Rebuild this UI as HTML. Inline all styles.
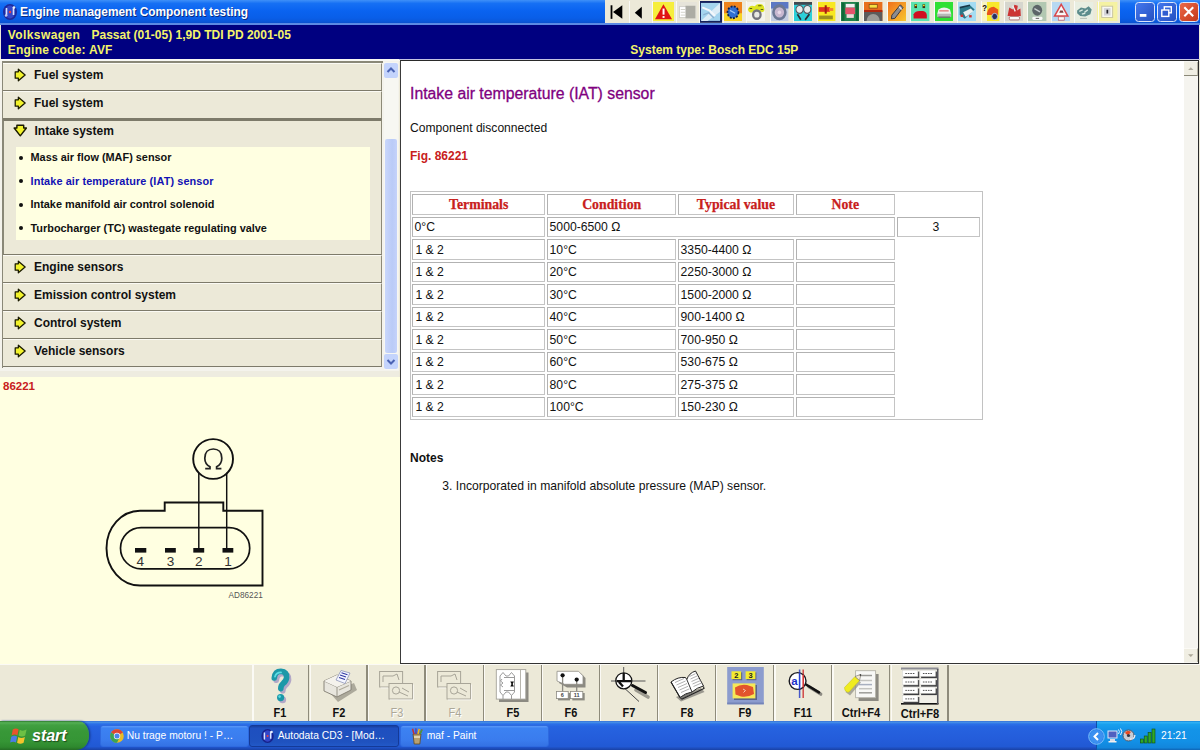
<!DOCTYPE html>
<html><head><meta charset="utf-8"><title>Autodata</title>
<style>
*{box-sizing:border-box;margin:0;padding:0}
html,body{width:1200px;height:750px;overflow:hidden;background:#ECE9D8;font-family:"Liberation Sans",sans-serif;}
.abs{position:absolute}
.tx{position:absolute;white-space:pre;line-height:1}
#title{left:0;top:0;width:1200px;height:24px;background:linear-gradient(#3F90F8 0,#1670F4 14%,#0A63F0 45%,#095EE8 75%,#0A56D8 92%,#0848BC 100%);}
#title .t{left:20px;top:4.1px;color:#fff;font-weight:bold;font-size:13px;white-space:nowrap;text-shadow:1px 1px 0 #0A2A80;transform-origin:0 0;transform:scaleX(.915)}
#hdr{left:1.3px;top:24.7px;width:1197.5px;height:34.3px;background:#000080;}
#hdr div{position:absolute;margin-top:-.5px;color:#F4F46A;font-weight:bold;font-size:12px;white-space:pre}
#lp{left:0;top:60px;width:399px;height:318px;background:#F4F3EC}
.row{position:absolute;margin-top:.5px;left:2px;width:380px;height:28px;background:#ECE9D8;border-bottom:1px solid #7D7A6A;border-right:1px solid #8D8A78;border-top:1px solid #FBFAF4}
.row span{position:absolute;left:32px;top:4px;font-weight:bold;font-size:12px;color:#111;white-space:nowrap}
.row.ex{border-top:2px solid #7D7A6A;border-left:2px solid #8A8878}
.row.ex span{left:30.5px;top:3px}
.ico{position:absolute;left:11.8px;top:4.9px;width:12.2px;height:14px}
.row.ex .ico{left:8.9px;top:3.2px;width:14.6px;height:13.6px}
#sub{left:16px;top:147px;width:353.7px;height:93.3px;background:#FFFFE1}
.sub{position:absolute;left:30.5px;font-weight:bold;font-size:10.9px;color:#111;white-space:nowrap}
.dot{position:absolute;left:18.5px;width:4px;height:4px;border-radius:2px;background:#111}
#sb{left:384px;top:62px;width:14px;height:308px;background:#F7F7F2}
#lfig{left:0;top:377px;width:399.5px;height:287.2px;background:#FFFFE1}

</style></head><body>
<div id="title" class="abs"><div class="t abs">Engine management Component testing</div></div>
<svg class="abs" style="left:2px;top:3px" width="17" height="18" viewBox="0 0 17 18">
<ellipse cx="8" cy="9" rx="7" ry="8" fill="#1C2A9C"/><ellipse cx="8" cy="9" rx="5" ry="6.5" fill="#3346C8"/>
<path d="M4.5 5 V13 M11.5 4 V12" stroke="#D8E4FF" stroke-width="1.6"/><circle cx="8" cy="9" r="1.2" fill="#F04040"/><circle cx="12" cy="4.5" r="1.3" fill="#E8F0FF"/><circle cx="4" cy="12.5" r="1.2" fill="#C0C8F0"/></svg>
<div class="abs" style="left:0px;top:23px;width:1200px;height:2px;background:#5C8AE4;"></div>
<div id="hdr" class="abs">
<div style="left:6.5px;top:3.8px;letter-spacing:.4px">Volkswagen</div>
<div style="left:90.2px;top:3.8px">Passat (01-05) 1,9D TDI PD 2001-05</div>
<div style="left:6.5px;top:19.1px;letter-spacing:.22px">Engine code: AVF</div>
<div style="left:629px;top:19.1px">System type: Bosch EDC 15P</div>
</div>
<div class="abs" style="left:604.5px;top:0px;width:515px;height:23px;background:#ECE9D8;"></div>
<svg class="abs" style="left:606.90px;top:2px" width="21.5" height="19.2" viewBox="0 0 21.5 20.5" preserveAspectRatio="none"><rect x="3.6" y="3.5" width="1.8" height="14.5" fill="#000"/><path d="M15.3 3.5 V18 L6 10.75 Z" fill="#000"/></svg>
<svg class="abs" style="left:630.34px;top:2px" width="21.5" height="19.2" viewBox="0 0 21.5 20.5" preserveAspectRatio="none"><path d="M11.8 5 V18 L4.8 11.5 Z" fill="#000"/></svg>
<svg class="abs" style="left:653.28px;top:2px" width="21" height="19.2" viewBox="0 0 21.5 20.5" preserveAspectRatio="none"><rect width="21.5" height="20.5" fill="#F6EE3C"/><path d="M10.7 2.5 L19.5 18.5 H2 Z" fill="#E01414"/><rect x="9.8" y="7" width="2" height="6.5" fill="#fff"/><rect x="9.8" y="15" width="2" height="2" fill="#fff"/></svg>
<svg class="abs" style="left:676.72px;top:2px" width="20.3" height="19.2" viewBox="0 0 21.5 20.5" preserveAspectRatio="none"><rect width="21.5" height="20.5" fill="#E6E4DA"/><rect x="2.5" y="5" width="9" height="11.5" fill="#fff" stroke="#C8C8C0" stroke-width=".8"/><rect x="9" y="4" width="10.5" height="13.5" fill="#ACACA4"/><path d="M4 8h5M4 11h5M4 14h5" stroke="#D0D0C8" stroke-width="1"/></svg>
<svg class="abs" style="left:698.56px;top:0.8px" width="23" height="21.8" viewBox="0 0 21.5 20.5" preserveAspectRatio="none"><rect x="0" y="0" width="21.5" height="20.5" fill="#14205C"/><rect x="1.8" y="1.8" width="17.9" height="16.9" fill="#A4D4EE"/><path d="M1.8 18.7 L19.7 1.8 V10 L8 18.7 Z" fill="#DCECF6"/><path d="M3 6 L10 9 L15 14" stroke="#F4F8FC" stroke-width="2" fill="none"/><path d="M4 13 L9 11 L14 16" stroke="#8CB0D0" stroke-width="1.2" fill="none"/></svg>
<svg class="abs" style="left:723.60px;top:2px" width="18.4" height="19.2" viewBox="0 0 21.5 20.5" preserveAspectRatio="none"><rect width="21.5" height="20.5" fill="#F0841C"/><rect y="12" width="21.5" height="8.5" fill="#F8D424"/><circle cx="10.5" cy="11" r="6.4" fill="#2F6FD2" stroke="#10204C" stroke-width="2" stroke-dasharray="2.2 1.6"/><path d="M7 9 L13 12" stroke="#A0C8F8" stroke-width="1.4"/></svg>
<svg class="abs" style="left:747.04px;top:2px" width="18.4" height="19.2" viewBox="0 0 21.5 20.5" preserveAspectRatio="none"><rect width="21.5" height="20.5" fill="#F4F4EC"/><path d="M1 8 Q3 2.5 9 4.5 Q12 1 17 2.5 Q21.5 4 20 10 Q17 12 14 9 Q9 8 6 11 Q2 12 1 8Z" fill="#DCE420"/><circle cx="11.5" cy="13.5" r="4.4" fill="#E8E8E4" stroke="#74747C" stroke-width="2.6"/><path d="M3 7h3M13 4h4M16 8h3" stroke="#606010" stroke-width="1.1"/></svg>
<svg class="abs" style="left:770.48px;top:2px" width="18.4" height="19.2" viewBox="0 0 21.5 20.5" preserveAspectRatio="none"><rect width="21.5" height="20.5" fill="#C4CEE2"/><rect width="21.5" height="7" fill="#5C78C4"/><circle cx="11" cy="11" r="7" fill="#C8B8D0" stroke="#6C7894" stroke-width="3"/><circle cx="11" cy="11" r="2" fill="#E8D8E8"/></svg>
<svg class="abs" style="left:793.92px;top:2px" width="18.4" height="19.2" viewBox="0 0 21.5 20.5" preserveAspectRatio="none"><rect width="21.5" height="20.5" fill="#2CD0D8"/><circle cx="6.5" cy="8" r="4.2" fill="#E8ECEC" stroke="#505860" stroke-width="1.2"/><circle cx="15.5" cy="8" r="4.2" fill="#E8ECEC" stroke="#505860" stroke-width="1.2"/><path d="M4 13 L8 19 M18 13 L13 19" stroke="#283038" stroke-width="2"/><rect x="0" y="0" width="21.5" height="3" fill="#404850"/></svg>
<svg class="abs" style="left:817.36px;top:2px" width="18.4" height="19.2" viewBox="0 0 21.5 20.5" preserveAspectRatio="none"><rect width="21.5" height="20.5" fill="#F8E820"/><rect x="2" y="5.5" width="13" height="5" fill="#E03420"/><rect x="9" y="3.5" width="2.4" height="9" fill="#A02010"/><rect x="14" y="6.5" width="5" height="3" fill="#F08030"/><rect x="2.5" y="14.5" width="16" height="4" fill="#9C9020"/></svg>
<svg class="abs" style="left:840.80px;top:2px" width="18.4" height="19.2" viewBox="0 0 21.5 20.5" preserveAspectRatio="none"><rect width="21.5" height="20.5" fill="#20844C"/><rect x="5.5" y="2" width="10.5" height="4" fill="#F0F0F0"/><rect x="5" y="6" width="11.5" height="7" fill="#E4546C"/><rect x="6.5" y="13" width="8.5" height="4" fill="#F0D8D8"/><rect x="1" y="1" width="3" height="19" fill="#106838"/><rect x="17.5" y="1" width="3" height="19" fill="#106838"/></svg>
<svg class="abs" style="left:864.24px;top:2px" width="18.4" height="19.2" viewBox="0 0 21.5 20.5" preserveAspectRatio="none"><rect width="21.5" height="20.5" fill="#E8701C"/><rect y="10" width="21.5" height="10.5" fill="#5C5C5C"/><rect x="6" y="2.5" width="9.5" height="4" fill="#F4E040" stroke="#804010" stroke-width=".8"/><path d="M3 20.5 A7.7 7.7 0 0 1 18.5 20.5 Z" fill="#9C9C98"/><rect y="8.5" width="21.5" height="2.2" fill="#B02810"/></svg>
<svg class="abs" style="left:887.68px;top:2px" width="18.4" height="19.2" viewBox="0 0 21.5 20.5" preserveAspectRatio="none"><defs><linearGradient id="g12" x1="0" y1="0" x2="1" y2="1"><stop offset="0" stop-color="#F0701C"/><stop offset="1" stop-color="#F8C830"/></linearGradient></defs><rect width="21.5" height="20.5" fill="url(#g12)"/><path d="M14.5 3 L17.5 6 L8 17.5 L4 18 L4.5 14 Z" fill="#8C8C90" stroke="#303038" stroke-width="1"/><path d="M13 5 L16 8" stroke="#E8E8F0" stroke-width="1.4"/></svg>
<svg class="abs" style="left:911.12px;top:2px" width="18.4" height="19.2" viewBox="0 0 21.5 20.5" preserveAspectRatio="none"><rect width="21.5" height="20.5" fill="#5CE4B0"/><path d="M3 17.5 V13 Q5 9.5 10 9.5 H14 Q18 10 18.5 14 V17.5 Z" fill="#D01020"/><rect x="4" y="2.5" width="3" height="4" fill="#403010"/><rect x="13.5" y="2.5" width="3" height="4" fill="#403010"/><rect x="4.5" y="3" width="2" height="1.4" fill="#F8E020"/><rect x="14" y="3" width="2" height="1.4" fill="#F8E020"/></svg>
<svg class="abs" style="left:934.56px;top:2px" width="18.4" height="19.2" viewBox="0 0 21.5 20.5" preserveAspectRatio="none"><rect width="21.5" height="20.5" fill="#30E034"/><path d="M4 8 Q10.5 4 17.5 8 L19 13 H2.5 Z" fill="#F0F0F0"/><rect x="2.5" y="12.5" width="16.5" height="3.4" fill="#B8B8B8"/><path d="M5 9.5 H16" stroke="#E04040" stroke-width="1"/><rect x="4" y="15.5" width="13.5" height="1.5" fill="#707070"/></svg>
<svg class="abs" style="left:958.00px;top:2px" width="18.4" height="19.2" viewBox="0 0 21.5 20.5" preserveAspectRatio="none"><rect width="21.5" height="20.5" fill="#A4DCF2"/><path d="M2 6 L14 3.5 L19.5 8 L8 18 L2 14 Z" fill="#2C7888"/><path d="M6 11 L15 7 L18 10 L9 16 Z" fill="#E8F0F0"/><path d="M2 6 L14 3.5" stroke="#183848" stroke-width="1.8"/><rect x="3" y="13.5" width="3" height="2.5" fill="#D03030"/><rect x="13" y="14" width="3" height="2.5" fill="#D03030"/></svg>
<svg class="abs" style="left:981.44px;top:2px" width="18.4" height="19.2" viewBox="0 0 21.5 20.5" preserveAspectRatio="none"><rect width="21.5" height="20.5" fill="#F8E82C"/><rect width="7" height="20.5" fill="#F8F4C0"/><path d="M7 12 Q8 5 15 5 L20 8 V14 H7 Z" fill="#E8541C"/><circle cx="16" cy="15.5" r="3.4" fill="#283060" stroke="#C0C8E0" stroke-width="1"/><text x="1.5" y="9.5" font-size="9" font-weight="bold" font-family="Liberation Sans" fill="#101010">?</text></svg>
<svg class="abs" style="left:1004.88px;top:2px" width="18.4" height="19.2" viewBox="0 0 21.5 20.5" preserveAspectRatio="none"><rect width="21.5" height="20.5" fill="#D6D6CE"/><path d="M3 15 L5 6 L9 8 L11 3 L15 4 L14 9 L18 7 L18.5 15 Z" fill="#CC3434"/><path d="M9 4 L12 10" stroke="#F0F0F0" stroke-width="1.6"/><rect x="5" y="15.5" width="12" height="3.6" rx="1.5" fill="#F8F8F8" stroke="#A04040" stroke-width=".7"/></svg>
<svg class="abs" style="left:1028.32px;top:2px" width="18.4" height="19.2" viewBox="0 0 21.5 20.5" preserveAspectRatio="none"><rect width="21.5" height="20.5" fill="#B2C8B2"/><circle cx="10.8" cy="8.8" r="5.8" fill="#5C6468"/><path d="M7.5 7 L14 10.5" stroke="#C8D0D0" stroke-width="1.6"/><rect x="5" y="15.8" width="12" height="3.4" rx="1.5" fill="#F8F8F8"/><path d="M9 17.5h4" stroke="#404040" stroke-width=".9"/></svg>
<svg class="abs" style="left:1051.76px;top:2px" width="18.4" height="19.2" viewBox="0 0 21.5 20.5" preserveAspectRatio="none"><rect width="21.5" height="20.5" fill="#B6D8F2"/><path d="M10.8 2.5 L18.5 15 H3 Z" fill="#F8F8F8" stroke="#D8484C" stroke-width="1.7"/><path d="M8.5 11.5 H13.5 L12.5 9 H9.5 Z" fill="#804040"/><rect x="7.3" y="15.8" width="7" height="3.6" fill="#F8F8F8" stroke="#C04040" stroke-width=".7"/></svg>
<svg class="abs" style="left:1075.20px;top:2px" width="18.4" height="19.2" viewBox="0 0 21.5 20.5" preserveAspectRatio="none"><rect width="21.5" height="20.5" fill="#E8EEE2"/><path d="M2.5 9 L7 6 L12 7 L16 4.5 L19.5 8 L18 13 L12 15.5 L6 15 L2.5 12 Z" fill="#5C8C8C"/><path d="M5 10 L9 8.5 M11 11 L15 8.5 M8 13 L12 12" stroke="#D8E8E0" stroke-width="1.5"/><path d="M6 17.5h8" stroke="#A0A8A0" stroke-width=".8"/></svg>
<svg class="abs" style="left:1097.44px;top:2px" width="20.4" height="19.2" viewBox="0 0 21.5 20.5" preserveAspectRatio="none"><rect width="21.5" height="20.5" fill="#F5F2A2"/><rect x="5" y="4.5" width="11.5" height="12" fill="#F8F8F0" stroke="#C8C4A0" stroke-width="1"/><rect x="7.3" y="6.5" width="7" height="8" fill="#D4D4D8"/><rect x="10" y="8.3" width="1.8" height="4" fill="#202028"/></svg>
<div class="abs" style="left:628.9px;top:1px;width:0.9px;height:22px;background:#FAFAF6;"></div>
<div class="abs" style="left:652.4px;top:1px;width:0.9px;height:22px;background:#FAFAF6;"></div>
<div class="abs" style="left:675.8px;top:1px;width:0.9px;height:22px;background:#FAFAF6;"></div>
<div class="abs" style="left:699.3px;top:1px;width:0.9px;height:22px;background:#FAFAF6;"></div>
<div class="abs" style="left:722.7px;top:1px;width:0.9px;height:22px;background:#FAFAF6;"></div>
<div class="abs" style="left:746.1px;top:1px;width:0.9px;height:22px;background:#FAFAF6;"></div>
<div class="abs" style="left:769.6px;top:1px;width:0.9px;height:22px;background:#FAFAF6;"></div>
<div class="abs" style="left:793.0px;top:1px;width:0.9px;height:22px;background:#FAFAF6;"></div>
<div class="abs" style="left:816.5px;top:1px;width:0.9px;height:22px;background:#FAFAF6;"></div>
<div class="abs" style="left:839.9px;top:1px;width:0.9px;height:22px;background:#FAFAF6;"></div>
<div class="abs" style="left:863.3px;top:1px;width:0.9px;height:22px;background:#FAFAF6;"></div>
<div class="abs" style="left:886.8px;top:1px;width:0.9px;height:22px;background:#FAFAF6;"></div>
<div class="abs" style="left:910.2px;top:1px;width:0.9px;height:22px;background:#FAFAF6;"></div>
<div class="abs" style="left:933.7px;top:1px;width:0.9px;height:22px;background:#FAFAF6;"></div>
<div class="abs" style="left:957.1px;top:1px;width:0.9px;height:22px;background:#FAFAF6;"></div>
<div class="abs" style="left:980.5px;top:1px;width:0.9px;height:22px;background:#FAFAF6;"></div>
<div class="abs" style="left:1004.0px;top:1px;width:0.9px;height:22px;background:#FAFAF6;"></div>
<div class="abs" style="left:1027.4px;top:1px;width:0.9px;height:22px;background:#FAFAF6;"></div>
<div class="abs" style="left:1050.9px;top:1px;width:0.9px;height:22px;background:#FAFAF6;"></div>
<div class="abs" style="left:1074.3px;top:1px;width:0.9px;height:22px;background:#FAFAF6;"></div>
<div class="abs" style="left:1097.7px;top:1px;width:0.9px;height:22px;background:#FAFAF6;"></div>
<div class="abs" style="left:1135px;top:2.1px;width:19.6px;height:19.9px;border:1px solid #DCE6FA;border-radius:3.5px;background:linear-gradient(135deg,#4478EE,#2450C0)"><svg width="17.5" height="17.5" viewBox="0 0 17.5 17.5" style="position:absolute;left:0;top:0"><rect x="3.8" y="11" width="6.6" height="2.8" fill="#fff"/></svg></div>
<div class="abs" style="left:1157.2px;top:2.1px;width:19.6px;height:19.9px;border:1px solid #DCE6FA;border-radius:3.5px;background:linear-gradient(135deg,#4478EE,#2450C0)"><svg width="17.5" height="17.5" viewBox="0 0 17.5 17.5" style="position:absolute;left:0;top:0"><rect x="6.3" y="3.8" width="7" height="6" fill="none" stroke="#fff" stroke-width="1.4"/><rect x="3.8" y="7" width="7" height="6.4" fill="#2E5CD0" stroke="#fff" stroke-width="1.4"/></svg></div>
<div class="abs" style="left:1179.1px;top:2.1px;width:19.6px;height:19.9px;border:1px solid #DCE6FA;border-radius:3.5px;background:linear-gradient(135deg,#EC6A48,#C43818)"><svg width="17.5" height="17.5" viewBox="0 0 17.5 17.5" style="position:absolute;left:0;top:0"><path d="M4.3 4.3 L13.2 13.2 M13.2 4.3 L4.3 13.2" stroke="#fff" stroke-width="2.1"/></svg></div>
<div id="lp" class="abs"></div>
<div class="abs" style="left:0px;top:59px;width:1200px;height:2px;background:#F8F8F4;"></div>
<div class="abs" style="left:399px;top:58.9px;width:801px;height:1.2px;background:#C4C4E4;"></div>
<div class="row" style="top:62px"><svg class="ico" viewBox="0 0 14 16"><path d="M1.4 4.4 H5 V1.4 L12.8 8 L5 14.6 V11.6 H1.4 Z" fill="#F2F22C" stroke="#1a1a00" stroke-width="1.45" stroke-linejoin="round"/></svg><span style="">Fuel system</span></div>
<div class="row" style="top:90px"><svg class="ico" viewBox="0 0 14 16"><path d="M1.4 4.4 H5 V1.4 L12.8 8 L5 14.6 V11.6 H1.4 Z" fill="#F2F22C" stroke="#1a1a00" stroke-width="1.45" stroke-linejoin="round"/></svg><span style="">Fuel system</span></div>
<div class="row ex" style="top:118px;height:136px"><svg class="ico" viewBox="0 0 15 15" preserveAspectRatio="none"><path d="M4 1.4 H11 V4.4 H13.8 L7.5 13 L1.2 4.4 H4 Z" fill="#F2F22C" stroke="#1a1a00" stroke-width="1.45" stroke-linejoin="round"/></svg><span>Intake system</span></div>
<div class="row" style="top:254px"><svg class="ico" viewBox="0 0 14 16"><path d="M1.4 4.4 H5 V1.4 L12.8 8 L5 14.6 V11.6 H1.4 Z" fill="#F2F22C" stroke="#1a1a00" stroke-width="1.45" stroke-linejoin="round"/></svg><span style="margin-top:.5px">Engine sensors</span></div>
<div class="row" style="top:282px"><svg class="ico" viewBox="0 0 14 16"><path d="M1.4 4.4 H5 V1.4 L12.8 8 L5 14.6 V11.6 H1.4 Z" fill="#F2F22C" stroke="#1a1a00" stroke-width="1.45" stroke-linejoin="round"/></svg><span style="margin-top:.5px">Emission control system</span></div>
<div class="row" style="top:310px"><svg class="ico" viewBox="0 0 14 16"><path d="M1.4 4.4 H5 V1.4 L12.8 8 L5 14.6 V11.6 H1.4 Z" fill="#F2F22C" stroke="#1a1a00" stroke-width="1.45" stroke-linejoin="round"/></svg><span style="margin-top:.5px">Control system</span></div>
<div class="row" style="top:338px"><svg class="ico" viewBox="0 0 14 16"><path d="M1.4 4.4 H5 V1.4 L12.8 8 L5 14.6 V11.6 H1.4 Z" fill="#F2F22C" stroke="#1a1a00" stroke-width="1.45" stroke-linejoin="round"/></svg><span style="margin-top:.5px">Vehicle sensors</span></div>
<div class="abs" style="left:1.5px;top:61px;width:1.5px;height:306.5px;background:#8A8878;"></div>
<div class="abs" style="left:1.5px;top:61px;width:381px;height:1.5px;background:#8A8878;"></div>
<div id="sub" class="abs"></div>
<div class="dot" style="top:155.5px"></div>
<div class="tx" style="left:30.50px;top:152.27px;font-size:10.9px;color:#111;font-weight:bold;">Mass air flow (MAF) sensor</div>
<div class="dot" style="top:179.0px"></div>
<div class="tx" style="left:30.50px;top:175.77px;font-size:10.9px;color:#1212B4;font-weight:bold;letter-spacing:.1px;">Intake air temperature (IAT) sensor</div>
<div class="dot" style="top:202.5px"></div>
<div class="tx" style="left:30.50px;top:199.27px;font-size:10.9px;color:#111;font-weight:bold;">Intake manifold air control solenoid</div>
<div class="dot" style="top:226.0px"></div>
<div class="tx" style="left:30.50px;top:222.77px;font-size:10.9px;color:#111;font-weight:bold;">Turbocharger (TC) wastegate regulating valve</div>
<div id="sb" class="abs"></div>
<div class="abs" style="left:384px;top:63px;width:14px;height:15px;background:#C4D4FC;border-radius:2px"><svg width="14" height="15" viewBox="0 0 14 15"><path d="M3.5 9 L7 5.5 L10.5 9" fill="none" stroke="#4A63B4" stroke-width="2"/></svg></div>
<div class="abs" style="left:384.5px;top:138.5px;width:12px;height:214.5px;background:linear-gradient(90deg,#C9D7FB,#BACBF7 60%,#C4D2FA);border-radius:2px"></div>
<div class="abs" style="left:384px;top:353.5px;width:14px;height:15.5px;background:#C4D4FC;border-radius:2px"><svg width="14" height="15" viewBox="0 0 14 15"><path d="M3.5 6 L7 9.5 L10.5 6" fill="none" stroke="#4A63B4" stroke-width="2"/></svg></div>
<div class="abs" style="left:0px;top:370.5px;width:399px;height:7px;background:#EEECE0;"></div>
<div id="lfig" class="abs"></div>
<div class="tx" style="left:3.00px;top:381.47px;font-size:11.5px;color:#C8201C;font-weight:bold;">86221</div>
<svg class="abs" style="left:0;top:377px" width="399" height="286" viewBox="0 377 399 286">
<g fill="none" stroke="#111" stroke-width="1.9">
<circle cx="213.1" cy="459" r="19.9" stroke-width="1.9"/>
<path d="M198.8 472.5 V548 M226.7 472.5 V548" stroke-width="1.45"/>
<path d="M140 510.8 H164.7 V502.5 H223.3 V510.8 H262.5 V585.5 H140 A33.5 37.35 0 0 1 140 510.8 Z" stroke-linejoin="miter"/>
<rect x="120.5" y="527.6" width="129.2" height="41.2" rx="20.6" ry="20.6" stroke-width="1.7"/>
<path d="M205.2 468.6 H210 V466.8 C206.2 464.8 204.8 461.6 204.8 458.2 C204.8 452.4 208.2 449 213.3 449 C218.4 449 221.8 452.4 221.8 458.2 C221.8 461.6 220.4 464.8 216.6 466.8 V468.6 H221.4" stroke-width="1.7" stroke="#222"/>
</g>
<g fill="#111">
<rect x="135" y="548" width="11.3" height="4.6"/><rect x="165" y="548" width="10.8" height="4.6"/><rect x="193.3" y="548" width="10.9" height="4.6"/><rect x="222.5" y="548" width="10.8" height="4.6"/>
</g>
<g font-family="Liberation Sans, sans-serif" font-size="13.6" fill="#333" text-anchor="middle">
<text x="140.3" y="565.6">4</text><text x="170.5" y="565.6">3</text><text x="198.7" y="565.6">2</text><text x="228" y="565.6">1</text>
</g>
<text x="228.6" y="598.4" font-family="Liberation Sans, sans-serif" font-size="8.2" fill="#555">AD86221</text>
</svg>
<div class="abs" style="left:399.6px;top:60.1px;width:799.7px;height:603.8px;background:#fff;border-left:1px solid #3a3a3a;border-top:1px solid #2a2a2a;border-bottom:1.2px solid #333;border-right:1.1px solid #2a2a2a"></div>
<div class="tx" style="left:410.00px;top:85.93px;font-size:15.8px;color:#800080;-webkit-text-stroke:.3px #800080;">Intake air temperature (IAT) sensor</div>
<div class="tx" style="left:410.00px;top:122.06px;font-size:12.1px;color:#111;">Component disconnected</div>
<div class="tx" style="left:410.00px;top:149.84px;font-size:12px;color:#C8201C;font-weight:bold;">Fig. 86221</div>
<div class="abs" style="left:409.8px;top:190.8px;width:573.2px;height:229px;background:transparent;border:1px solid #C2C2C2"></div>
<div class="abs" style="left:412.2px;top:194.0px;width:133.00000000000006px;height:20.5px;background:#fff;border:1px solid #B2B2B2;border-right-color:#C4C4C4;border-bottom-color:#C4C4C4"></div>
<div class="tx" style="left:412.2px;width:133.00000000000006px;text-align:center;top:197.94px;font-size:13.8px;font-weight:bold;-webkit-text-stroke:.25px #C8201C;font-family:'Liberation Serif',serif;color:#C8201C">Terminals</div>
<div class="abs" style="left:547.2px;top:194.0px;width:129.0px;height:20.5px;background:#fff;border:1px solid #B2B2B2;border-right-color:#C4C4C4;border-bottom-color:#C4C4C4"></div>
<div class="tx" style="left:547.2px;width:129.0px;text-align:center;top:197.94px;font-size:13.8px;font-weight:bold;-webkit-text-stroke:.25px #C8201C;font-family:'Liberation Serif',serif;color:#C8201C">Condition</div>
<div class="abs" style="left:678.2px;top:194.0px;width:115.59999999999991px;height:20.5px;background:#fff;border:1px solid #B2B2B2;border-right-color:#C4C4C4;border-bottom-color:#C4C4C4"></div>
<div class="tx" style="left:678.2px;width:115.59999999999991px;text-align:center;top:197.94px;font-size:13.8px;font-weight:bold;-webkit-text-stroke:.25px #C8201C;font-family:'Liberation Serif',serif;color:#C8201C">Typical value</div>
<div class="abs" style="left:795.8px;top:194.0px;width:99.0px;height:20.5px;background:#fff;border:1px solid #B2B2B2;border-right-color:#C4C4C4;border-bottom-color:#C4C4C4"></div>
<div class="tx" style="left:795.8px;width:99.0px;text-align:center;top:197.94px;font-size:13.8px;font-weight:bold;-webkit-text-stroke:.25px #C8201C;font-family:'Liberation Serif',serif;color:#C8201C">Note</div>
<div class="abs" style="left:412.2px;top:216.5px;width:133.00000000000006px;height:20.5px;background:#fff;border:1px solid #B2B2B2;border-right-color:#C4C4C4;border-bottom-color:#C4C4C4"></div>
<div class="tx" style="left:414.60px;top:221.48px;font-size:12.19px;color:#111;">0°C</div>
<div class="abs" style="left:547.2px;top:216.5px;width:347.5999999999999px;height:20.5px;background:#fff;border:1px solid #B2B2B2;border-right-color:#C4C4C4;border-bottom-color:#C4C4C4"></div>
<div class="tx" style="left:549.60px;top:221.48px;font-size:12.19px;color:#111;">5000-6500 Ω</div>
<div class="abs" style="left:896.8px;top:216.5px;width:83.0px;height:20.5px;background:#fff;border:1px solid #B2B2B2;border-right-color:#C4C4C4;border-bottom-color:#C4C4C4"></div>
<div class="tx" style="left:896.8px;width:83.0px;text-align:center;top:221.48px;font-size:12.19px;color:#111;margin-left:-2.3px">3</div>
<div class="abs" style="left:412.2px;top:239.0px;width:133.00000000000006px;height:20.5px;background:#fff;border:1px solid #B2B2B2;border-right-color:#C4C4C4;border-bottom-color:#C4C4C4"></div>
<div class="abs" style="left:547.2px;top:239.0px;width:129.0px;height:20.5px;background:#fff;border:1px solid #B2B2B2;border-right-color:#C4C4C4;border-bottom-color:#C4C4C4"></div>
<div class="abs" style="left:678.2px;top:239.0px;width:115.59999999999991px;height:20.5px;background:#fff;border:1px solid #B2B2B2;border-right-color:#C4C4C4;border-bottom-color:#C4C4C4"></div>
<div class="abs" style="left:795.8px;top:239.0px;width:99.0px;height:20.5px;background:#fff;border:1px solid #B2B2B2;border-right-color:#C4C4C4;border-bottom-color:#C4C4C4"></div>
<div class="tx" style="left:415.40px;top:243.98px;font-size:12.19px;color:#111;">1 &amp; 2</div>
<div class="tx" style="left:549.60px;top:243.98px;font-size:12.19px;color:#111;">10°C</div>
<div class="tx" style="left:680.60px;top:243.98px;font-size:12.19px;color:#111;">3350-4400 Ω</div>
<div class="abs" style="left:412.2px;top:261.5px;width:133.00000000000006px;height:20.5px;background:#fff;border:1px solid #B2B2B2;border-right-color:#C4C4C4;border-bottom-color:#C4C4C4"></div>
<div class="abs" style="left:547.2px;top:261.5px;width:129.0px;height:20.5px;background:#fff;border:1px solid #B2B2B2;border-right-color:#C4C4C4;border-bottom-color:#C4C4C4"></div>
<div class="abs" style="left:678.2px;top:261.5px;width:115.59999999999991px;height:20.5px;background:#fff;border:1px solid #B2B2B2;border-right-color:#C4C4C4;border-bottom-color:#C4C4C4"></div>
<div class="abs" style="left:795.8px;top:261.5px;width:99.0px;height:20.5px;background:#fff;border:1px solid #B2B2B2;border-right-color:#C4C4C4;border-bottom-color:#C4C4C4"></div>
<div class="tx" style="left:415.40px;top:266.48px;font-size:12.19px;color:#111;">1 &amp; 2</div>
<div class="tx" style="left:549.60px;top:266.48px;font-size:12.19px;color:#111;">20°C</div>
<div class="tx" style="left:680.60px;top:266.48px;font-size:12.19px;color:#111;">2250-3000 Ω</div>
<div class="abs" style="left:412.2px;top:284.0px;width:133.00000000000006px;height:20.5px;background:#fff;border:1px solid #B2B2B2;border-right-color:#C4C4C4;border-bottom-color:#C4C4C4"></div>
<div class="abs" style="left:547.2px;top:284.0px;width:129.0px;height:20.5px;background:#fff;border:1px solid #B2B2B2;border-right-color:#C4C4C4;border-bottom-color:#C4C4C4"></div>
<div class="abs" style="left:678.2px;top:284.0px;width:115.59999999999991px;height:20.5px;background:#fff;border:1px solid #B2B2B2;border-right-color:#C4C4C4;border-bottom-color:#C4C4C4"></div>
<div class="abs" style="left:795.8px;top:284.0px;width:99.0px;height:20.5px;background:#fff;border:1px solid #B2B2B2;border-right-color:#C4C4C4;border-bottom-color:#C4C4C4"></div>
<div class="tx" style="left:415.40px;top:288.98px;font-size:12.19px;color:#111;">1 &amp; 2</div>
<div class="tx" style="left:549.60px;top:288.98px;font-size:12.19px;color:#111;">30°C</div>
<div class="tx" style="left:680.60px;top:288.98px;font-size:12.19px;color:#111;">1500-2000 Ω</div>
<div class="abs" style="left:412.2px;top:306.5px;width:133.00000000000006px;height:20.5px;background:#fff;border:1px solid #B2B2B2;border-right-color:#C4C4C4;border-bottom-color:#C4C4C4"></div>
<div class="abs" style="left:547.2px;top:306.5px;width:129.0px;height:20.5px;background:#fff;border:1px solid #B2B2B2;border-right-color:#C4C4C4;border-bottom-color:#C4C4C4"></div>
<div class="abs" style="left:678.2px;top:306.5px;width:115.59999999999991px;height:20.5px;background:#fff;border:1px solid #B2B2B2;border-right-color:#C4C4C4;border-bottom-color:#C4C4C4"></div>
<div class="abs" style="left:795.8px;top:306.5px;width:99.0px;height:20.5px;background:#fff;border:1px solid #B2B2B2;border-right-color:#C4C4C4;border-bottom-color:#C4C4C4"></div>
<div class="tx" style="left:415.40px;top:311.48px;font-size:12.19px;color:#111;">1 &amp; 2</div>
<div class="tx" style="left:549.60px;top:311.48px;font-size:12.19px;color:#111;">40°C</div>
<div class="tx" style="left:680.60px;top:311.48px;font-size:12.19px;color:#111;">900-1400 Ω</div>
<div class="abs" style="left:412.2px;top:329.0px;width:133.00000000000006px;height:20.5px;background:#fff;border:1px solid #B2B2B2;border-right-color:#C4C4C4;border-bottom-color:#C4C4C4"></div>
<div class="abs" style="left:547.2px;top:329.0px;width:129.0px;height:20.5px;background:#fff;border:1px solid #B2B2B2;border-right-color:#C4C4C4;border-bottom-color:#C4C4C4"></div>
<div class="abs" style="left:678.2px;top:329.0px;width:115.59999999999991px;height:20.5px;background:#fff;border:1px solid #B2B2B2;border-right-color:#C4C4C4;border-bottom-color:#C4C4C4"></div>
<div class="abs" style="left:795.8px;top:329.0px;width:99.0px;height:20.5px;background:#fff;border:1px solid #B2B2B2;border-right-color:#C4C4C4;border-bottom-color:#C4C4C4"></div>
<div class="tx" style="left:415.40px;top:333.98px;font-size:12.19px;color:#111;">1 &amp; 2</div>
<div class="tx" style="left:549.60px;top:333.98px;font-size:12.19px;color:#111;">50°C</div>
<div class="tx" style="left:680.60px;top:333.98px;font-size:12.19px;color:#111;">700-950 Ω</div>
<div class="abs" style="left:412.2px;top:351.5px;width:133.00000000000006px;height:20.5px;background:#fff;border:1px solid #B2B2B2;border-right-color:#C4C4C4;border-bottom-color:#C4C4C4"></div>
<div class="abs" style="left:547.2px;top:351.5px;width:129.0px;height:20.5px;background:#fff;border:1px solid #B2B2B2;border-right-color:#C4C4C4;border-bottom-color:#C4C4C4"></div>
<div class="abs" style="left:678.2px;top:351.5px;width:115.59999999999991px;height:20.5px;background:#fff;border:1px solid #B2B2B2;border-right-color:#C4C4C4;border-bottom-color:#C4C4C4"></div>
<div class="abs" style="left:795.8px;top:351.5px;width:99.0px;height:20.5px;background:#fff;border:1px solid #B2B2B2;border-right-color:#C4C4C4;border-bottom-color:#C4C4C4"></div>
<div class="tx" style="left:415.40px;top:356.48px;font-size:12.19px;color:#111;">1 &amp; 2</div>
<div class="tx" style="left:549.60px;top:356.48px;font-size:12.19px;color:#111;">60°C</div>
<div class="tx" style="left:680.60px;top:356.48px;font-size:12.19px;color:#111;">530-675 Ω</div>
<div class="abs" style="left:412.2px;top:374.0px;width:133.00000000000006px;height:20.5px;background:#fff;border:1px solid #B2B2B2;border-right-color:#C4C4C4;border-bottom-color:#C4C4C4"></div>
<div class="abs" style="left:547.2px;top:374.0px;width:129.0px;height:20.5px;background:#fff;border:1px solid #B2B2B2;border-right-color:#C4C4C4;border-bottom-color:#C4C4C4"></div>
<div class="abs" style="left:678.2px;top:374.0px;width:115.59999999999991px;height:20.5px;background:#fff;border:1px solid #B2B2B2;border-right-color:#C4C4C4;border-bottom-color:#C4C4C4"></div>
<div class="abs" style="left:795.8px;top:374.0px;width:99.0px;height:20.5px;background:#fff;border:1px solid #B2B2B2;border-right-color:#C4C4C4;border-bottom-color:#C4C4C4"></div>
<div class="tx" style="left:415.40px;top:378.98px;font-size:12.19px;color:#111;">1 &amp; 2</div>
<div class="tx" style="left:549.60px;top:378.98px;font-size:12.19px;color:#111;">80°C</div>
<div class="tx" style="left:680.60px;top:378.98px;font-size:12.19px;color:#111;">275-375 Ω</div>
<div class="abs" style="left:412.2px;top:396.5px;width:133.00000000000006px;height:20.5px;background:#fff;border:1px solid #B2B2B2;border-right-color:#C4C4C4;border-bottom-color:#C4C4C4"></div>
<div class="abs" style="left:547.2px;top:396.5px;width:129.0px;height:20.5px;background:#fff;border:1px solid #B2B2B2;border-right-color:#C4C4C4;border-bottom-color:#C4C4C4"></div>
<div class="abs" style="left:678.2px;top:396.5px;width:115.59999999999991px;height:20.5px;background:#fff;border:1px solid #B2B2B2;border-right-color:#C4C4C4;border-bottom-color:#C4C4C4"></div>
<div class="abs" style="left:795.8px;top:396.5px;width:99.0px;height:20.5px;background:#fff;border:1px solid #B2B2B2;border-right-color:#C4C4C4;border-bottom-color:#C4C4C4"></div>
<div class="tx" style="left:415.40px;top:401.48px;font-size:12.19px;color:#111;">1 &amp; 2</div>
<div class="tx" style="left:549.60px;top:401.48px;font-size:12.19px;color:#111;">100°C</div>
<div class="tx" style="left:680.60px;top:401.48px;font-size:12.19px;color:#111;">150-230 Ω</div>
<div class="tx" style="left:410.00px;top:451.54px;font-size:12px;color:#111;font-weight:bold;">Notes</div>
<div class="tx" style="left:442.30px;top:479.72px;font-size:12.15px;color:#111;">3. Incorporated in manifold absolute pressure (MAP) sensor.</div>
<div class="abs" style="left:1184.4px;top:61.1px;width:13.8px;height:601.6px;background:#F5F4EF;"></div>
<div class="abs" style="left:1184.4px;top:62px;width:13.6px;height:14.2px;background:#F0EEE3;border-bottom:1.2px solid #8A8878;border-right:1px solid #B8B5A5"></div>
<svg class="abs" style="left:1188.3px;top:66.8px" width="5.6" height="3.4" viewBox="0 0 8 5"><path d="M0 4.5 L4 0.5 L8 4.5 Z" fill="#ACA899"/></svg>
<div class="abs" style="left:1184.4px;top:648px;width:13.6px;height:14.4px;background:#F0EEE3;border-top:1px solid #FBFAF5;border-right:1px solid #B8B5A5"></div>
<svg class="abs" style="left:1188.3px;top:653.8px" width="5.6" height="3.4" viewBox="0 0 8 5"><path d="M0 0.5 L4 4.5 L8 0.5 Z" fill="#ACA899"/></svg>
<div class="abs" style="left:0px;top:663.8px;width:1200px;height:58px;background:#ECE9D8;"></div>
<div class="abs" style="left:0px;top:664.2px;width:1200px;height:1px;background:#FBFAF5;"></div>
<div class="abs" style="left:252.0px;top:664.5px;width:1.5px;height:57px;background:#FBFAF5;"></div>
<div class="abs" style="left:308.2px;top:664.5px;width:1.3px;height:57px;background:#8E8B7B;"></div>
<div class="abs" style="left:309.5px;top:664.5px;width:1.3px;height:57px;background:#FBFAF5;"></div>
<div class="abs" style="left:366.3px;top:664.5px;width:1.3px;height:57px;background:#8E8B7B;"></div>
<div class="abs" style="left:367.6px;top:664.5px;width:1.3px;height:57px;background:#FBFAF5;"></div>
<div class="abs" style="left:424.4px;top:664.5px;width:1.3px;height:57px;background:#8E8B7B;"></div>
<div class="abs" style="left:425.7px;top:664.5px;width:1.3px;height:57px;background:#FBFAF5;"></div>
<div class="abs" style="left:482.5px;top:664.5px;width:1.3px;height:57px;background:#8E8B7B;"></div>
<div class="abs" style="left:483.8px;top:664.5px;width:1.3px;height:57px;background:#FBFAF5;"></div>
<div class="abs" style="left:540.6px;top:664.5px;width:1.3px;height:57px;background:#8E8B7B;"></div>
<div class="abs" style="left:541.9px;top:664.5px;width:1.3px;height:57px;background:#FBFAF5;"></div>
<div class="abs" style="left:598.7px;top:664.5px;width:1.3px;height:57px;background:#8E8B7B;"></div>
<div class="abs" style="left:600.0px;top:664.5px;width:1.3px;height:57px;background:#FBFAF5;"></div>
<div class="abs" style="left:656.8px;top:664.5px;width:1.3px;height:57px;background:#8E8B7B;"></div>
<div class="abs" style="left:658.1px;top:664.5px;width:1.3px;height:57px;background:#FBFAF5;"></div>
<div class="abs" style="left:714.9px;top:664.5px;width:1.3px;height:57px;background:#8E8B7B;"></div>
<div class="abs" style="left:716.2px;top:664.5px;width:1.3px;height:57px;background:#FBFAF5;"></div>
<div class="abs" style="left:773.0px;top:664.5px;width:1.3px;height:57px;background:#8E8B7B;"></div>
<div class="abs" style="left:774.3px;top:664.5px;width:1.3px;height:57px;background:#FBFAF5;"></div>
<div class="abs" style="left:831.1px;top:664.5px;width:1.3px;height:57px;background:#8E8B7B;"></div>
<div class="abs" style="left:832.4px;top:664.5px;width:1.3px;height:57px;background:#FBFAF5;"></div>
<div class="abs" style="left:889.2px;top:664.5px;width:1.3px;height:57px;background:#8E8B7B;"></div>
<div class="abs" style="left:890.5px;top:664.5px;width:1.3px;height:57px;background:#FBFAF5;"></div>
<div class="abs" style="left:947.3px;top:664.5px;width:1.3px;height:57px;background:#8E8B7B;"></div>
<div class="tx" style="left:250.4px;width:60px;text-align:center;top:708.33px;font-size:11.9px;color:#111;font-weight:bold;transform:scaleX(.92);">F1</div>
<div class="tx" style="left:308.6px;width:60px;text-align:center;top:708.33px;font-size:11.9px;color:#111;font-weight:bold;transform:scaleX(.92);">F2</div>
<div class="tx" style="left:366.6px;width:60px;text-align:center;top:708.33px;font-size:11.9px;color:#ACA899;font-weight:normal;text-shadow:1px 1px 0 #fff;transform:scaleX(.92);">F3</div>
<div class="tx" style="left:424.8px;width:60px;text-align:center;top:708.33px;font-size:11.9px;color:#ACA899;font-weight:normal;text-shadow:1px 1px 0 #fff;transform:scaleX(.92);">F4</div>
<div class="tx" style="left:482.8px;width:60px;text-align:center;top:708.33px;font-size:11.9px;color:#111;font-weight:bold;transform:scaleX(.92);">F5</div>
<div class="tx" style="left:540.9px;width:60px;text-align:center;top:708.33px;font-size:11.9px;color:#111;font-weight:bold;transform:scaleX(.92);">F6</div>
<div class="tx" style="left:599.0px;width:60px;text-align:center;top:708.33px;font-size:11.9px;color:#111;font-weight:bold;transform:scaleX(.92);">F7</div>
<div class="tx" style="left:657.1px;width:60px;text-align:center;top:708.33px;font-size:11.9px;color:#111;font-weight:bold;transform:scaleX(.92);">F8</div>
<div class="tx" style="left:715.2px;width:60px;text-align:center;top:708.33px;font-size:11.9px;color:#111;font-weight:bold;transform:scaleX(.92);">F9</div>
<div class="tx" style="left:773.3px;width:60px;text-align:center;top:708.33px;font-size:11.9px;color:#111;font-weight:bold;transform:scaleX(.92);">F11</div>
<div class="tx" style="left:831.4px;width:60px;text-align:center;top:708.33px;font-size:11.9px;color:#111;font-weight:bold;transform:scaleX(.935);">Ctrl+F4</div>
<div class="tx" style="left:889.5px;width:60px;text-align:center;top:708.93px;font-size:11.9px;color:#111;font-weight:bold;transform:scaleX(.935);">Ctrl+F8</div>
<svg class="abs" style="left:266px;top:665px" width="30" height="40" viewBox="266 665 30 40">
<g transform="translate(2,2.2)" opacity=".6"><path d="M274.3 678 Q275 671.3 280.8 671.3 Q287 671.8 286.6 677.6 Q286.2 681.2 283 683.6 Q280.8 685.4 280.8 688.6" fill="none" stroke="#8C7CBC" stroke-width="5.6" stroke-linecap="round"/><circle cx="280.6" cy="697.6" r="3.5" fill="#8C7CBC"/></g>
<path d="M274.3 678 Q275 671.3 280.8 671.3 Q287 671.8 286.6 677.6 Q286.2 681.2 283 683.6 Q280.8 685.4 280.8 688.6" fill="none" stroke="#1C98A8" stroke-width="5.6" stroke-linecap="round"/>
<path d="M275 676.6 Q276 672.4 281 672.4" fill="none" stroke="#5CDCE4" stroke-width="1.8" stroke-linecap="round"/>
<circle cx="280.6" cy="697.6" r="3.6" fill="#1C98A8"/><circle cx="279.6" cy="696.6" r="1.3" fill="#5CDCE4"/></svg>
<svg class="abs" style="left:320px;top:666px" width="40" height="40" viewBox="320 666 40 40">
<path d="M330 693 L354 683 L357 690 L338 702 Z" fill="#9C988C" opacity=".8"/>
<path d="M324 681 L337 675 L351 681 L351 690 L337 697 L324 691 Z" fill="#E8E6DE" stroke="#807C70" stroke-width=".9"/>
<path d="M324 681 L337 687 L351 681 M337 687 V697" fill="none" stroke="#908C80" stroke-width=".9"/>
<path d="M324 681 L337 675 L351 681 L337 687 Z" fill="#F4F2EC"/>
<path d="M336 680 L341 670.5 L350 673 L345 683.5 Z" fill="#F4F6FF" stroke="#8088B0" stroke-width=".7"/>
<path d="M340 675 L346 677 M339 677.5 L345 679.5 M341.5 672.8 L347.5 674.8" stroke="#3038A0" stroke-width="1.1"/>
<path d="M339 690 L349 685.5" stroke="#B0AC9C" stroke-width="1.2"/></svg>
<svg class="abs" style="left:378px;top:668px" width="40" height="36" viewBox="378 668 40 36"><g fill="#ECE9D8" stroke="#A8A598" stroke-width="1"><rect x="379.6" y="671.5" width="23" height="15.5"/><rect x="389" y="683.5" width="23.5" height="15.5"/></g>
<g fill="none" stroke="#A8A598" stroke-width="1"><path d="M383 682 V676 H393 L397 674 L399 680"/><circle cx="396" cy="690.5" r="3.6"/><path d="M399 692 L408 696 M402 688 L409 692"/></g>
<g fill="none" stroke="#fff" stroke-width=".8" opacity=".8"><path d="M380.6 687.9 H388"/><path d="M390 699.9 H413.4 V684.5"/></g></svg>
<svg class="abs" style="left:436.4px;top:668px" width="40" height="36" viewBox="436.4 668 40 36"><g fill="#ECE9D8" stroke="#A8A598" stroke-width="1"><rect x="438.0" y="671.5" width="23" height="15.5"/><rect x="447.4" y="683.5" width="23.5" height="15.5"/></g>
<g fill="none" stroke="#A8A598" stroke-width="1"><path d="M441.4 682 V676 H451.4 L455.4 674 L457.4 680"/><circle cx="454.4" cy="690.5" r="3.6"/><path d="M457.4 692 L466.4 696 M460.4 688 L467.4 692"/></g>
<g fill="none" stroke="#fff" stroke-width=".8" opacity=".8"><path d="M439.0 687.9 H446.4"/><path d="M448.4 699.9 H471.79999999999995 V684.5"/></g></svg>
<svg class="abs" style="left:494px;top:667px" width="38" height="38" viewBox="494 667 38 38">
<rect x="499" y="672.5" width="29.5" height="29.5" fill="#8C8A82"/>
<rect x="496.3" y="669.6" width="29.5" height="29.5" fill="#fff" stroke="#A4A29A" stroke-width=".9"/>
<path d="M520.5 670 V699" stroke="#B8B6AE" stroke-width="1"/>
<g fill="none" stroke="#909090" stroke-width=".9"><path d="M500 676 L503 672.5 L506 676 H508.5 L511.5 672.5 L514.5 676 V692 L511.5 695.5 L508.5 692 H506 L503 695.5 L500 692 Z"/><path d="M502 679 L500.5 681 L503 683 L500.5 685 L503 687"/><path d="M504 677.5 H514 M504 690.5 H514"/><path d="M503 695.5 V699 M511.5 695.5 V699"/></g>
<path d="M510.3 681.5 h3.6 l-1.2 2.5 l1.2 2.5 h-3.6 l1.2 -2.5 Z" fill="#111"/></svg>
<svg class="abs" style="left:552px;top:667px" width="38" height="38" viewBox="552 667 38 38">
<path d="M559 673.5 H581 L585.5 678 V687.5 H567 L559 683 Z" fill="#8C8A82"/>
<path d="M557 671.3 H578.5 L583 675.8 V684.3 H564.5 L557 681 Z" fill="#fff" stroke="#908E86" stroke-width=".8"/>
<path d="M562.6 675.3 V692 M576.7 679.6 V692" stroke="#8C8A82" stroke-width="1.3"/>
<circle cx="562.6" cy="675.3" r="2.1" fill="#111"/><circle cx="576.7" cy="679.6" r="2.1" fill="#111"/>
<rect x="558" y="693" width="12" height="7.4" fill="#8C8A82"/><rect x="572.3" y="693" width="12.4" height="7.4" fill="#8C8A82"/>
<rect x="556.4" y="691.4" width="11.8" height="7.2" fill="#fff" stroke="#8C8A82" stroke-width=".8"/><rect x="570.6" y="691.4" width="12.2" height="7.2" fill="#fff" stroke="#8C8A82" stroke-width=".8"/>
<text x="562.3" y="697.3" font-size="5.5" font-family="Liberation Sans" font-weight="bold" fill="#444" text-anchor="middle">6</text><text x="576.7" y="697.3" font-size="5.5" font-family="Liberation Sans" font-weight="bold" fill="#444" text-anchor="middle">11</text></svg>
<svg class="abs" style="left:608px;top:665px" width="44" height="40" viewBox="608 665 44 40">
<path d="M623.7 667 V673 M611 681 H616 M632 681 H645.5" stroke="#555" stroke-width="1"/>
<path d="M621 685 L639 701.5" stroke="#444" stroke-width="1"/>
<path d="M636 690 L648 697" stroke="#9C9A90" stroke-width="3.6" stroke-linecap="round"/>
<circle cx="623.8" cy="680.8" r="8" fill="#fff" stroke="#111" stroke-width="1.3"/>
<path d="M623.7 673 V681.5 M616.5 681.2 H631.5 M619 682 L623 686.5" stroke="#111" stroke-width="2.3" fill="none"/>
<path d="M632.5 685.5 L645.5 692.5" stroke="#111" stroke-width="3" stroke-linecap="round"/></svg>
<svg class="abs" style="left:666px;top:667px" width="42" height="38" viewBox="666 667 42 38">
<path d="M676 697 L701 688 L704.5 692 L681 701.5 Z" fill="#8C8A82" opacity=".85"/>
<path d="M671 682 Q678 676.5 685.5 677.5 L686.8 679.5 Q689 673 695.5 671 L703.5 686 Q697 687.5 692 692 Q685.5 693 680 697.5 Z" fill="#fff" stroke="#222" stroke-width="1"/>
<path d="M686.8 679.5 L692 692" stroke="#333" stroke-width="1"/>
<path d="M671 682 L680 697.5 L682 699 L692.5 694 L704 688.5 L703.5 686.5" fill="none" stroke="#222" stroke-width="1.1"/>
<path d="M680 697.5 L692 692 M681 698.6 L692.5 693.3" stroke="#555" stroke-width=".7"/>
<g stroke="#9A9A9A" stroke-width=".8"><path d="M675 682.5 L684 678.5 M676.5 685 L685.5 681 M678 687.5 L687 683.5 M679.5 690 L688 686.3 M681 692.5 L689.5 688.8"/><path d="M689.5 676.5 L695.5 673.7 M690.5 679 L697.5 675.8 M691.5 681.5 L699 678.2 M692.5 684 L700.5 680.5 M693.5 686.5 L701.5 683"/></g></svg>
<svg class="abs" style="left:726px;top:666px" width="40" height="40" viewBox="726 666 40 40">
<rect x="727.2" y="667" width="36.6" height="37.3" fill="#8C9CCE"/>
<rect x="727.2" y="702.5" width="36.6" height="1.8" fill="#7484B8"/>
<rect x="732.6" y="672.4" width="9.6" height="7.8" fill="#5C6488"/><rect x="746.6" y="672.4" width="9.8" height="7.8" fill="#5C6488"/>
<rect x="731.5" y="671.3" width="9.6" height="7.8" fill="#F4EC30"/><rect x="745.6" y="671.3" width="9.8" height="7.8" fill="#F4EC30"/>
<text x="736.3" y="678.2" font-size="7.5" font-weight="bold" font-family="Liberation Sans" fill="#222" text-anchor="middle">2</text><text x="750.5" y="678.2" font-size="7.5" font-weight="bold" font-family="Liberation Sans" fill="#222" text-anchor="middle">3</text>
<rect x="734" y="685" width="23" height="15" fill="#5C6488"/>
<rect x="732.6" y="683.4" width="22.8" height="15" fill="#F6E858"/>
<path d="M735 687.5 Q740 684 747 685 L753 687 L754 694 Q748 697.5 741 696.5 L735.5 694.5 Z" fill="#E2542C"/>
<path d="M743 689 L745.5 690.5 L743.5 692.5" stroke="#F8C8B0" stroke-width="1" fill="none"/></svg>
<svg class="abs" style="left:784px;top:666px" width="42" height="38" viewBox="784 666 42 38">
<path d="M799.6 669.5 V698 " stroke="#4858C8" stroke-width="1.5"/><path d="M803.2 669.5 V698" stroke="#D04848" stroke-width="1.5"/>
<path d="M808 685.5 L820 693" stroke="#8C8A82" stroke-width="3.2" stroke-linecap="round" transform="translate(.8,1.2)"/>
<circle cx="797.6" cy="681" r="8.4" fill="#fff" stroke="#181820" stroke-width="1.4"/>
<path d="M799.6 672.8 V689.2" stroke="#2840D0" stroke-width="1.6"/><path d="M803.2 674.5 V687.6" stroke="#D83838" stroke-width="1.6"/>
<text x="794.4" y="685.3" font-size="11.5" font-weight="bold" font-family="Liberation Sans" fill="#1C30C8" text-anchor="middle">a</text>
<path d="M806 684.5 L819 692.3" stroke="#111" stroke-width="2.6" stroke-linecap="round"/></svg>
<svg class="abs" style="left:840px;top:666px" width="42" height="38" viewBox="840 666 42 38">
<rect x="858.6" y="674" width="20" height="27" fill="#8C8A82"/>
<rect x="855.6" y="670.7" width="20" height="27" fill="#F8F8F6" stroke="#B4B2A8" stroke-width=".9"/>
<g stroke="#9C9C98" stroke-width="1.5"><path d="M860 675.5 H872"/><path d="M859 680.5 H872" stroke="#C4C4C0"/><path d="M859 684.6 H872" stroke="#A8B0C0"/><path d="M859 688.7 H872" stroke="#C4C4C0"/><path d="M859 692.8 H872"/></g>
<path d="M844 690.5 L855.5 677.5 L859.5 681 L848.5 694 Z" fill="#8C8A82" transform="translate(1.5,1.5)" opacity=".7"/>
<path d="M844.5 687.5 L855 676.5 L859.5 680.5 L849 692 Q845 693 844.5 687.5Z" fill="#F0EC20" stroke="#C8C420" stroke-width=".6"/>
<path d="M855 676.5 L861 674.3 L859.5 680.5 Z" fill="#F4E8D0" stroke="#666" stroke-width=".6"/><path d="M859.3 674.9 L861 674.3 L860.6 676 Z" fill="#111"/></svg>
<svg class="abs" style="left:899px;top:666px" width="42" height="40" viewBox="899 666 42 40"><rect x="901" y="667.5" width="37.5" height="2.2" fill="#8C8C94"/><rect x="901" y="703" width="37.5" height="1.6" fill="#111"/><rect x="936.8" y="669" width="1.7" height="35" fill="#55555c"/><rect x="901.8" y="669.7" width="35" height="33.3" fill="#F2F0E8"/><rect x="903.5" y="671.6" width="15.8" height="6.6" fill="#3c3c40"/><rect x="902.3" y="670.2" width="15.6" height="6.2" fill="#fff" stroke="#D0D0C8" stroke-width=".5"/><path d="M905.3 673.5 H914.8" stroke="#555" stroke-width="1" stroke-dasharray="1.6 .9"/><rect x="921.1" y="671.6" width="15.8" height="6.6" fill="#3c3c40"/><rect x="919.9" y="670.2" width="15.6" height="6.2" fill="#fff" stroke="#D0D0C8" stroke-width=".5"/><path d="M922.9 673.5 H932.4" stroke="#555" stroke-width="1" stroke-dasharray="1.6 .9"/><rect x="903.5" y="680.1" width="15.8" height="6.6" fill="#3c3c40"/><rect x="902.3" y="678.7" width="15.6" height="6.2" fill="#fff" stroke="#D0D0C8" stroke-width=".5"/><path d="M905.3 682.0 H914.8" stroke="#555" stroke-width="1" stroke-dasharray="1.6 .9"/><rect x="921.1" y="680.1" width="15.8" height="6.6" fill="#3c3c40"/><rect x="919.9" y="678.7" width="15.6" height="6.2" fill="#fff" stroke="#D0D0C8" stroke-width=".5"/><path d="M922.9 682.0 H932.4" stroke="#555" stroke-width="1" stroke-dasharray="1.6 .9"/><rect x="903.5" y="688.5" width="15.8" height="6.6" fill="#3c3c40"/><rect x="902.3" y="687.1" width="15.6" height="6.2" fill="#fff" stroke="#D0D0C8" stroke-width=".5"/><path d="M905.3 690.4 H914.8" stroke="#555" stroke-width="1" stroke-dasharray="1.6 .9"/><rect x="921.1" y="688.5" width="15.8" height="6.6" fill="#3c3c40"/><rect x="919.9" y="687.1" width="15.6" height="6.2" fill="#fff" stroke="#D0D0C8" stroke-width=".5"/><path d="M922.9 690.4 H932.4" stroke="#555" stroke-width="1" stroke-dasharray="1.6 .9"/><rect x="903.5" y="697.0" width="15.8" height="6.6" fill="#3c3c40"/><rect x="902.3" y="695.6" width="15.6" height="6.2" fill="#fff" stroke="#D0D0C8" stroke-width=".5"/><path d="M905.3 698.9 H914.8" stroke="#555" stroke-width="1" stroke-dasharray="1.6 .9"/></svg>
<div class="abs" style="left:0;top:721.4px;width:1200px;height:28.6px;background:linear-gradient(#3168D5 0,#4993E6 4%,#2C70E8 10%,#2663E0 20%,#245DDB 60%,#2159D4 88%,#1941A5 100%)"></div>
<div class="abs" style="left:0;top:721.4px;width:89px;height:28.6px;border-radius:0 11px 13px 0/0 14px 14px 0;background:linear-gradient(#2E7A2E 0,#55B055 6%,#41A041 14%,#389838 35%,#359535 70%,#2E882E 90%,#246C24 100%);box-shadow:1.5px 0 2px #173E9A"></div>
<div class="tx" style="left:32px;top:727.19px;font-size:16.2px;font-weight:bold;font-style:italic;color:#fff;text-shadow:1px 1px 1px #1C4A1C;letter-spacing:-.1px">start</div>
<svg class="abs" style="left:9.5px;top:726.5px" width="19" height="18" viewBox="0 0 19 18">
<path d="M2.8 2.6 Q5.8 0.6 8.6 2.4 L7.4 8.2 Q4.6 6.6 1.6 8.4 Z" fill="#E8542C"/>
<path d="M9.8 2.8 Q12.6 4.6 16.6 2.6 L15.2 8.6 Q11.8 10.4 8.6 8.6 Z" fill="#6CC044"/>
<path d="M1.3 9.8 Q4.3 7.9 7.1 9.6 L5.9 15.4 Q3.1 13.8 0.1 15.6 Z" fill="#4C7CE8"/>
<path d="M8.3 10 Q11.3 11.9 14.9 10 L13.6 15.8 Q10.3 17.6 7.1 15.8 Z" fill="#F4C42C"/></svg>
<div class="abs" style="left:100px;top:725.3px;width:148.5px;height:22px;border-radius:3px;background:linear-gradient(#5A98F8 0,#3C82F2 12%,#3A7CEE 70%,#3472E4 100%);border:1px solid #2E6AE0"></div><svg class="abs" style="left:109.7px;top:728.8px" width="14" height="14" viewBox="0 0 14 14">
<circle cx="7" cy="7" r="6.8" fill="#E8BC28"/><path d="M7 7 L1.1 3.6 A6.8 6.8 0 0 1 12.9 3.6 Z" fill="#DC4434"/><path d="M7 7 L1.1 3.6 A6.8 6.8 0 0 0 7 13.8 L9.5 8.4Z" fill="#3CA454"/><path d="M7 4 H12.9 " stroke="#DC4434" stroke-width="0"/>
<circle cx="7" cy="7" r="3.2" fill="#F4F4F4"/><circle cx="7" cy="7" r="2.5" fill="#4C84E8"/></svg><div class="tx" style="left:126.8px;top:731.28px;font-size:10.3px;color:#fff">Nu trage motoru ! - P…</div>
<div class="abs" style="left:249px;top:725.3px;width:150px;height:22px;border-radius:3px;background:linear-gradient(#173E9E 0,#1E4FBF 12%,#1F52BF 80%,#2259C8 100%);border:1px solid #143A98"></div><svg class="abs" style="left:260px;top:728px" width="16" height="16" viewBox="0 0 17 18">
<ellipse cx="8" cy="9" rx="7" ry="8" fill="#16228C"/><ellipse cx="8" cy="9" rx="5" ry="6.5" fill="#3346C8"/>
<path d="M4.5 5 V13 M11.5 4 V12" stroke="#D8E4FF" stroke-width="1.6"/><circle cx="8" cy="9" r="1.2" fill="#F04040"/><circle cx="12.5" cy="4.5" r="1.4" fill="#E8F0FF"/></svg><div class="tx" style="left:277.7px;top:731.28px;font-size:10.3px;color:#fff">Autodata CD3 - [Mod…</div>
<div class="abs" style="left:400px;top:725.3px;width:148.5px;height:22px;border-radius:3px;background:linear-gradient(#5A98F8 0,#3C82F2 12%,#3A7CEE 70%,#3472E4 100%);border:1px solid #2E6AE0"></div><svg class="abs" style="left:409.5px;top:727.5px" width="14" height="17" viewBox="0 0 14 17">
<path d="M3 6 H11 L9.8 16 H4.2 Z" fill="#B8A070" stroke="#604820" stroke-width=".8"/><path d="M4 9 H10" stroke="#E8E0C0" stroke-width="1.6"/>
<path d="M4 6 L2.5 .8 M6 6 L5.8 .5 M8 6 L9.2 .8 M10 6 L12 1.5" stroke="#C83030" stroke-width="1.5"/><path d="M6 6 L5.8 .5" stroke="#3858D0" stroke-width="1.5"/><path d="M8 6 L9.2 .8" stroke="#E8C020" stroke-width="1.5"/><path d="M10 6 L12 1.5" stroke="#40A040" stroke-width="1.5"/></svg><div class="tx" style="left:426.7px;top:731.28px;font-size:10.3px;color:#fff">maf - Paint</div>
<div class="abs" style="left:1096px;top:721.4px;width:104px;height:28.6px;background:linear-gradient(#1584DA 0,#2FB0F4 5%,#18A0EE 12%,#1394E8 30%,#1290E6 70%,#1286DC 92%,#0E64B4 100%);border-left:1px solid #1050A8"></div>
<svg class="abs" style="left:1088px;top:727.5px" width="17" height="17" viewBox="0 0 17 17"><circle cx="8.5" cy="8.5" r="7.8" fill="#2C84EC" stroke="#7CC0FA" stroke-width="1"/><circle cx="8.5" cy="8.5" r="6.6" fill="#3C90F0"/><path d="M10 5 L6.5 8.5 L10 12" fill="none" stroke="#fff" stroke-width="2"/></svg>
<svg class="abs" style="left:1106px;top:727px" width="50" height="18" viewBox="1106 727 50 18">
<rect x="1108" y="731" width="9" height="7" fill="#5060C0" stroke="#E0E8F8" stroke-width="1"/><rect x="1110" y="739" width="5" height="2" fill="#D8DCE8"/><rect x="1108.5" y="741" width="8" height="1.5" fill="#F0F0F0"/>
<path d="M1118.5 729.5 q1.8 2 0 4.5 M1120.5 728.5 q2.6 3 0 6.5" fill="none" stroke="#E8F0FF" stroke-width="1"/>
<circle cx="1128.5" cy="735.5" r="5.5" fill="#C8CCD4" stroke="#505868" stroke-width="1"/><path d="M1125 733 a4 4 0 0 1 6 -1 l-3 3.5 z" fill="#E84820"/><circle cx="1128.5" cy="735.5" r="1.6" fill="#303848"/><path d="M1130 739 q4 1 5 -4" fill="none" stroke="#E8ECF4" stroke-width="1.3"/>
<g fill="#30A828" stroke="#104C10" stroke-width=".6"><rect x="1140.3" y="739" width="3" height="4"/><rect x="1144.2" y="736" width="3" height="7"/><rect x="1148.1" y="732.5" width="3" height="10.5"/><rect x="1152" y="729" width="3" height="14"/></g></svg>
<div class="tx" style="left:1161px;top:730.88px;font-size:10.3px;color:#fff">21:21</div>
</body></html>
